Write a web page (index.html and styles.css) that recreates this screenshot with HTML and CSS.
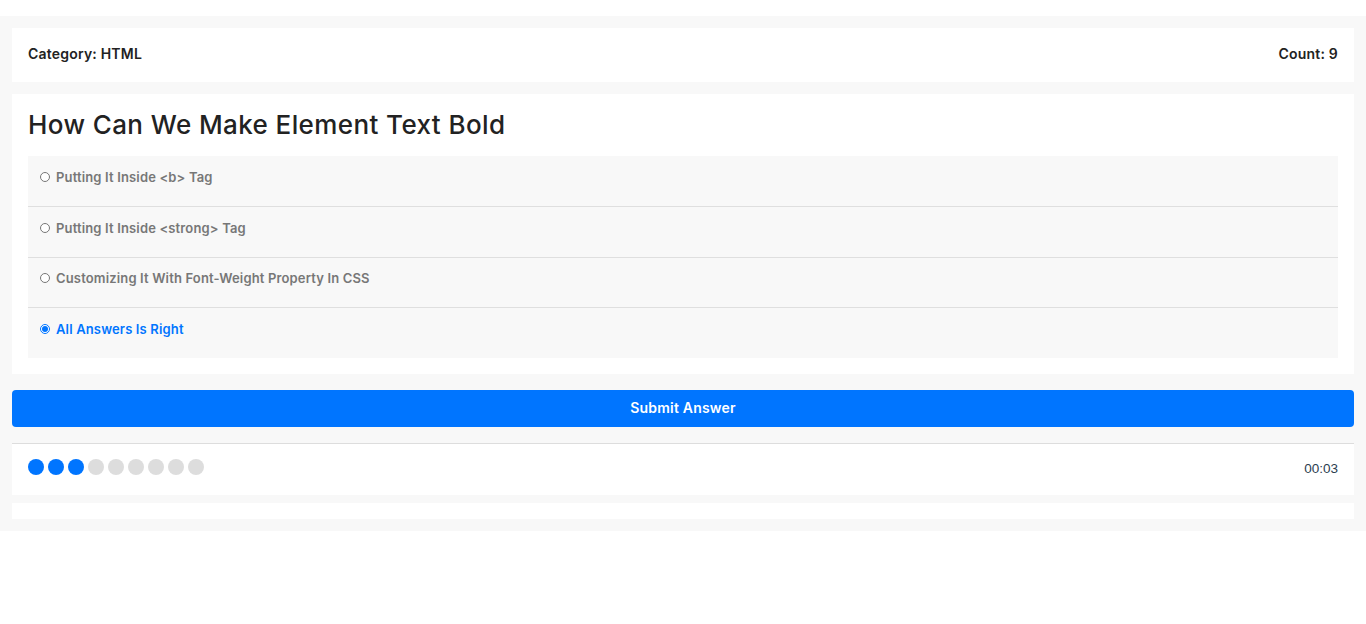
FILE: index.html
```html
<!DOCTYPE html>
<html>
<head>
<meta charset="utf-8">
<link rel="stylesheet" href="styles.css">
</head>
<body>
<div class="quiz-app">
  <div class="quiz-info">
    <div class="category">Category: <span>HTML</span></div>
    <div class="count">Count: <span>9</span></div>
  </div>
  <div class="quiz-area">
    <h2>How Can We Make Element Text Bold</h2>
    <div class="answers-area">
      <div class="answer">
        <input type="radio" name="q" id="a1">
        <label for="a1">Putting It Inside &lt;b&gt; Tag</label>
      </div>
      <div class="answer">
        <input type="radio" name="q" id="a2">
        <label for="a2">Putting It Inside &lt;strong&gt; Tag</label>
      </div>
      <div class="answer">
        <input type="radio" name="q" id="a3">
        <label for="a3">Customizing It With Font-Weight Property In CSS</label>
      </div>
      <div class="answer">
        <input type="radio" name="q" id="a4" checked>
        <label for="a4">All Answers Is Right</label>
      </div>
    </div>
  </div>
  <button class="submit-button">Submit Answer</button>
  <div class="bullets">
    <div class="spans">
      <span class="on"></span><span class="on"></span><span class="on"></span><span></span><span></span><span></span><span></span><span></span><span></span>
    </div>
    <div class="countdown">00:03</div>
  </div>
  <div class="results"></div>
</div>
</body>
</html>
```

FILE: styles.css
```css
* { box-sizing: border-box; }
body {
  margin: 0;
  font-family: "Inter", "Noto Sans", sans-serif;
  background: #fff;
}
.quiz-app {
  margin-top: 16px;
  background: #f8f8f8;
  padding: 12px;
}
.quiz-info {
  display: flex;
  justify-content: space-between;
  align-items: center;
  background: #fff;
  padding: 0 16px 3px;
  height: 54px;
  font-size: 14px;
  font-weight: 600;
  color: #222;
  letter-spacing: 0.2px;
}
.quiz-area {
  background: #fff;
  margin-top: 12px;
  padding: 16px;
}
.quiz-area h2 {
  margin: 0 0 16px;
  font-size: 26px;
  line-height: 30px;
  font-weight: 500;
  color: #222;
  letter-spacing: 0.4px;
}
.answers-area {
  background: #f8f8f8;
}
.answer {
  display: flex;
  align-items: center;
  padding: 11px 12px 19px;
  height: 50px;
}
.answer + .answer { border-top: 1px solid #dfdfdf; height: 50.67px; }
.answer input {
  margin: 0 6px 0 0;
  width: 10px;
  height: 10px;
  accent-color: #0075ff;
}
.answer label {
  font-size: 13px;
  line-height: 20px;
  font-weight: 600;
  color: #777;
  letter-spacing: 0.15px;
}
.answer input:checked + label { color: #0075ff; }
.submit-button {
  display: block;
  width: 100%;
  margin-top: 16px;
  height: 37px;
  border: none;
  border-radius: 4px;
  background: #0075ff;
  color: #fff;
  font-family: inherit;
  font-size: 14px;
  font-weight: 600;
  letter-spacing: 0.2px;
  padding: 0 0 2px;
}
.bullets {
  margin-top: 16px;
  border-top: 1px solid #ddd;
  background: #fff;
  height: 52px;
  padding: 15px 16px 0;
  display: flex;
  align-items: flex-start;
  justify-content: space-between;
}
.spans { display: flex; gap: 4px; }
.spans span {
  width: 16px;
  height: 16px;
  border-radius: 50%;
  background: #ddd;
}
.spans span.on { background: #0075ff; }
.countdown {
  font-family: "Liberation Sans", Arial, sans-serif;
  font-size: 13.5px;
  line-height: 18px;
  margin-top: 1px;
  color: #2c3e50;
}
.results {
  margin-top: 8px;
  background: #fff;
  height: 16px;
}
```
